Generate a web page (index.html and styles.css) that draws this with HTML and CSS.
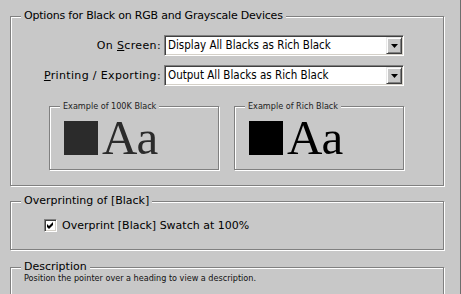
FILE: index.html
```html
<!DOCTYPE html>
<html>
<head>
<meta charset="utf-8">
<link rel="stylesheet" href="styles.css">
</head>
<body>
<div class="window">
  <div class="group g1">
    <div class="legend title">Options for Black on RGB and Grayscale Devices</div>
    <div class="rows">
      <label class="lbl">On <u>S</u>creen:</label>
      <div class="select"><span class="value">Display All Blacks as Rich Black</span><span class="drop"><svg width="7" height="4" viewBox="0 0 7 4"><path d="M0 0H7L3.5 4Z" fill="#000"/></svg></span></div>
      <label class="lbl"><u>P</u>rinting / Exporting:</label>
      <div class="select"><span class="value">Output All Blacks as Rich Black</span><span class="drop"><svg width="7" height="4" viewBox="0 0 7 4"><path d="M0 0H7L3.5 4Z" fill="#000"/></svg></span></div>
    </div>
    <div class="examples">
      <div class="ex">
        <div class="ex-legend">Example of 100K Black</div>
        <div class="ex-body"><span class="swatch k100"></span><span class="aa k100">Aa</span></div>
      </div>
      <div class="ex">
        <div class="ex-legend">Example of Rich Black</div>
        <div class="ex-body"><span class="swatch rich"></span><span class="aa rich">Aa</span></div>
      </div>
    </div>
  </div>
  <div class="group g2">
    <div class="legend">Overprinting of [Black]</div>
    <div class="check-row">
      <span class="checkbox"><svg width="7" height="7" viewBox="0 0 7 7"><path d="M0 2L2 4L6 0V3L2 7L0 5Z" fill="#000"/></svg></span>
      <span class="check-label">Overprint [Black] Swatch at 100%</span>
    </div>
  </div>
  <div class="group g3">
    <div class="legend">Description</div>
    <div class="desc">Position the pointer over a heading to view a description.</div>
  </div>
</div>
</body>
</html>
```
FILE: styles.css
```css
html, body {
  margin: 0;
  padding: 0;
  background: #c8c8c8;
  overflow: hidden;
}
.window {
  width: 461px;
  height: 294px;
  overflow: hidden;
  border-right: 1px solid #6e6e6e;
  padding: 16px 0 0 10px;
  box-sizing: border-box;
  font-family: "DejaVu Sans", sans-serif;
  font-size: 11px;
  line-height: 13px;
  color: #000;
}
.group {
  width: 434px;
  box-sizing: border-box;
  border: 1px solid #808080;
  box-shadow: inset 1px 1px 0 #fff, 1px 1px 0 #fff;
}
.legend {
  width: fit-content;
  margin: -8px 0 0 10px;
  padding: 0 3px;
  height: 14px;
  line-height: 14px;
  background: #c8c8c8;
}
.legend.title {
  letter-spacing: -0.2px;
}
.g1 { height: 170px; }
.rows {
  display: grid;
  grid-template-columns: 150px 240px;
  column-gap: 3px;
  row-gap: 9px;
  margin-top: 12px;
  align-items: center;
}
.lbl {
  text-align: right;
  letter-spacing: 0.35px;
}
.select {
  height: 21px;
  box-sizing: border-box;
  background: #fff;
  border-style: solid;
  border-width: 1px;
  border-color: #808080 #fff #fff #808080;
  box-shadow: inset 1px 1px 0 #404040, inset -1px -1px 0 #d4d0c8;
  display: flex;
  align-items: center;
  padding: 0 1px 0 3px;
}
.value {
  flex: 1;
  font-family: "DejaVu Sans Condensed", "DejaVu Sans", sans-serif;
  font-size: 11.5px;
}
.drop {
  width: 16px;
  height: 17px;
  box-sizing: border-box;
  background: #c8c8c8;
  border-style: solid;
  border-width: 1px;
  border-color: #e8e8e8 #404040 #404040 #e8e8e8;
  box-shadow: inset 1px 1px 0 #fff, inset -1px -1px 0 #808080;
  display: flex;
  align-items: center;
  justify-content: center;
}
.drop svg { display: block; }
.examples {
  display: flex;
  gap: 15px;
  margin: 20px 0 0 38px;
}
.ex {
  width: 170px;
  height: 64px;
  box-sizing: border-box;
  border: 1px solid #808080;
  box-shadow: inset 1px 1px 0 #fff, 1px 1px 0 #fff;
}
.ex-legend {
  width: fit-content;
  margin: -6px 0 0 10px;
  padding: 0 3px;
  height: 11px;
  line-height: 11px;
  font-family: "DejaVu Sans Condensed", "DejaVu Sans", sans-serif;
  font-size: 9px;
  color: #222;
  background: #c8c8c8;
}
.ex-body {
  display: flex;
  align-items: flex-start;
  margin: 9px 0 0 14px;
}
.swatch {
  width: 34px;
  height: 34px;
}
.swatch.k100 { background: #2b2b2b; }
.swatch.rich { background: #000; }
.aa {
  font-family: "Liberation Serif", "Times New Roman", serif;
  font-size: 49px;
  line-height: 34px;
  height: 34px;
  margin-left: 4px;
  letter-spacing: -1px;
}
.aa.k100 { color: #2b2b2b; }
.aa.rich { color: #000; }
.g2 {
  margin-top: 15px;
  height: 49px;
}
.check-row {
  display: flex;
  align-items: center;
  margin: 11px 0 0 33px;
}
.checkbox {
  width: 13px;
  height: 13px;
  box-sizing: border-box;
  background: #fff;
  border-style: solid;
  border-width: 1px;
  border-color: #808080 #fff #fff #808080;
  box-shadow: inset 1px 1px 0 #404040, inset -1px -1px 0 #d4d0c8;
  display: flex;
  align-items: center;
  justify-content: center;
}
.checkbox svg { display: block; }
.check-label { margin-left: 5px; }
.g3 {
  margin-top: 17px;
  height: 40px;
}
.desc {
  font-family: "DejaVu Sans Condensed", "DejaVu Sans", sans-serif;
  font-size: 9px;
  line-height: 11px;
  margin: -1px 0 0 13px;
  color: #111;
}
```
